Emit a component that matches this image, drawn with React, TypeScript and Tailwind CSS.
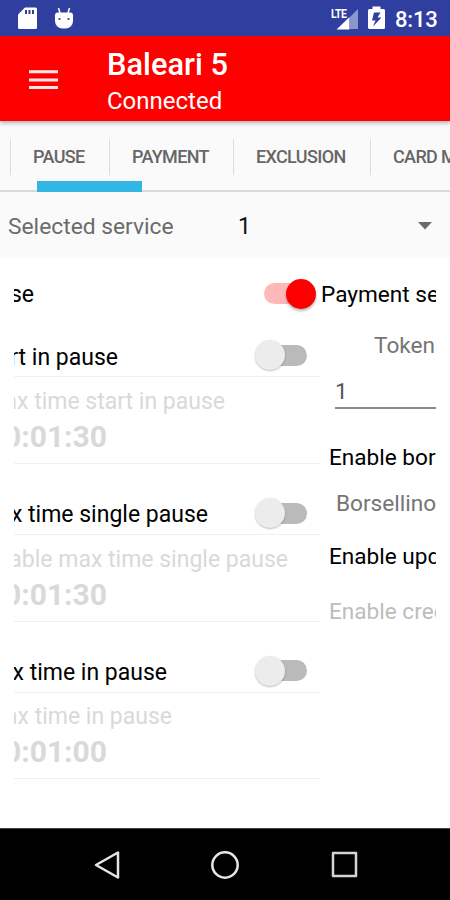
import type { ReactNode } from 'react'
import clsx from 'clsx'

// ── Data ──

const TABS = [
  { label: 'PAUSE', width: 'w-[99px]' },
  { label: 'PAYMENT', width: 'w-[124px]' },
  { label: 'EXCLUSION', width: 'w-[137px]' },
  { label: 'CARD MANAGEMENT', width: 'w-[220px]' },
]

const PAUSE_SETTINGS = [
  { title: 'rt in pause', titleBox: 'w-[104px] pt-[5px]', label: 'ax time start in pause', labelBox: 'w-[211px]', time: '0:01:30', row: 'h-[48px]', head: 'h-[42px]', body: 'h-[87px] pt-[9px]' },
  { title: 'x time single pause', titleBox: 'w-[194px] pt-[4px]', label: 'able max time single pause', labelBox: 'w-[274px]', time: '0:01:30', row: 'h-[71px]', head: 'h-[42px]', body: 'h-[87px] pt-[9px]' },
  { title: 'x time in pause', titleBox: 'w-[153px] pt-[5px]', label: 'ax time in pause', labelBox: 'w-[158px]', time: '0:01:00', row: 'h-[71px]', head: 'h-[43px]', body: 'h-[86px] pt-[8px]' },
]

// ── Status bar ──

function StatusBar() {
  return (
    <div className="flex h-9 items-center bg-[#303f9f] pr-3 pl-[18px] text-white">
      <svg width="19" height="23" viewBox="0 0 19 23">
        <path d="M7 0.5h10.500a1.500 1.500 0 0 1 1.500 1.500v18.500a1.500 1.500 0 0 1-1.500 1.500H1.500A1.500 1.500 0 0 1 0 20.500V7.500z" fill="#fff" />
        <path d="M8 3v4M11.500 3v4M15 3v4" stroke="#303f9f" strokeWidth="2" />
      </svg>
      <svg className="ml-[18px]" width="18" height="22" viewBox="0 0 18 22">
        <path d="M3.500 1l1.500 5M14.500 1l-1.500 5" stroke="#fff" strokeWidth="1.500" />
        <path d="M0 7.500Q0.500 5.500 2.500 5.500h13q2 0 2.500 2v6.500a7.500 7.500 0 0 1-7.500 7.500h-3a7.500 7.500 0 0 1-7.500-7.500z" fill="#fff" />
        <circle cx="4.500" cy="12" r="1.100" fill="#303f9f" />
        <circle cx="13.500" cy="12" r="1.100" fill="#303f9f" />
      </svg>
      <div className="flex-1" />
      <div className="relative mt-[1px] h-[22px] w-[28px]">
        <span className="absolute -top-[1px] left-0 origin-left scale-x-[0.8] text-[13px] leading-[14px] font-bold tracking-[-0.5px]">LTE</span>
        <svg className="absolute inset-0" width="28" height="22" viewBox="0 0 28 22">
          <path d="M19 9L27 1v20H19z" fill="#8d96cb" />
          <path d="M5.500 21.500L18.500 9v12.500z" fill="#fff" />
        </svg>
      </div>
      <svg className="-mt-[1px] ml-[9px]" width="17" height="24" viewBox="0 0 17 24">
        <path d="M4.500 0.500h8v2.500h3a1.500 1.500 0 0 1 1.500 1.500v17a1.500 1.500 0 0 1-1.500 1.500h-14A1.500 1.500 0 0 1 0 21.500v-17A1.500 1.500 0 0 1 1.500 3h3z" fill="#fff" />
        <path d="M12.500 6.500H6L4 14.500h3.500L5 20.500L13.500 11.500H9.500z" fill="#303f9f" />
      </svg>
      <span className="mt-[3px] ml-[10px] w-[43px] text-[22px] leading-6 font-medium tracking-[-0.200px] whitespace-nowrap">8:13</span>
    </div>
  )
}

function AppBar() {
  return (
    <header className="relative z-10 flex h-[85px] items-center bg-[#ff0000] pl-[29px] text-white shadow-[0_2px_4px_rgba(0,0,0,0.3)]">
      <svg className="mt-[2px]" width="29" height="20" viewBox="0 0 29 20">
        <path d="M0 1.700h29M0 9.900h29M0 17.500h29" stroke="#fff" strokeOpacity="0.9" strokeWidth="3" />
      </svg>
      <div className="ml-[49px] flex flex-col pt-[8px]">
        <h1 className="text-[30.800px] leading-[37px] font-medium">Baleari 5</h1>
        <p className="text-[24px] leading-[36px]">Connected</p>
      </div>
    </header>
  )
}

function Tabs() {
  return (
    <nav className="relative h-[71px] border-b-2 border-[#d9d9d9] bg-[#fafafa]">
      <div className="flex overflow-hidden pt-[18px] pl-[10px]">
        {TABS.map(tab => (
          <div key={tab.label} className={clsx('flex h-9 shrink-0 items-center border-l border-[#dcdcdc] pl-[22px]', tab.width)}>
            <span className="text-[18px] leading-6 font-medium tracking-[-0.650px] whitespace-nowrap text-[#666]">{tab.label}</span>
          </div>
        ))}
      </div>
      <div className="absolute top-[60px] left-[37px] h-[11px] w-[105px] bg-[#33b5e5]" />
    </nav>
  )
}

function ServiceSpinner() {
  return (
    <div className="flex h-[66px] items-center bg-[#fafafa] pr-[18px] pl-2">
      <span className="w-[230px] pt-[5px] text-[22.800px] text-[#6b6b6b]">Selected service</span>
      <span className="pt-[5px] text-[23px] text-[#111]">1</span>
      <svg className="mt-[1px] ml-auto" width="14" height="8" viewBox="0 0 14 8">
        <path d="M0 0h14L7 7.500z" fill="#6b6b6b" />
      </svg>
    </div>
  )
}

// ── Settings ──

function Switch({ on }: { on?: boolean }) {
  return (
    <div className={clsx('flex h-[21px] w-[43px] shrink-0 items-center rounded-full', on ? 'justify-end bg-[#ffb8b8]' : 'bg-[#bababa]')}>
      <div
        className={clsx(
          'size-[30px] shrink-0 rounded-full',
          on ? '-mr-[9px] bg-[#ff0000] shadow-[0_2px_3px_rgba(0,0,0,0.3)]' : '-ml-[9px] bg-[#ececec] shadow-[0_1px_2px_rgba(0,0,0,0.25)]',
        )}
      />
    </div>
  )
}

// Text anchored to its right edge, cut off by the left side of the page
function CutText({ className, children }: { className: string; children: ReactNode }) {
  return <div className={clsx('flex justify-end overflow-hidden whitespace-nowrap', className)}>{children}</div>
}

function PausePage() {
  return (
    <section className="w-[306px] shrink-0">
      <div className="flex h-[71px] items-center justify-between pr-[13px]">
        <CutText className="w-[20px] pt-[3px] text-[23px] leading-8 text-black">se</CutText>
        <Switch on />
      </div>
      {PAUSE_SETTINGS.map(item => (
        <div key={item.title}>
          <div className={clsx('flex items-end border-b border-[#f0f0f0] pr-[13px]', item.row)}>
            <div className={clsx('flex w-full items-center justify-between', item.head)}>
              <CutText className={clsx('text-[23px] leading-8 text-black', item.titleBox)}>{item.title}</CutText>
              <Switch />
            </div>
          </div>
          <div className={clsx('flex flex-col border-b border-[#f0f0f0]', item.body)}>
            <CutText className={clsx('text-[23px] leading-8 text-[#d9d9d9]', item.labelBox)}>{item.label}</CutText>
            <CutText className="-mt-[1px] w-[93px] text-[30px] leading-10 font-bold text-[#d9d9d9]">{item.time}</CutText>
          </div>
        </div>
      ))}
    </section>
  )
}

function PaymentPage() {
  return (
    <section className="w-[116px] shrink-0 overflow-hidden pl-[1px] text-[22.600px] leading-8 whitespace-nowrap text-black">
      <div className="pt-[21px]">Payment se</div>
      <div className="mt-[19px] pl-[53px] text-[#757575]">Token</div>
      <div className="mt-[14px] ml-[14px] h-[33px] border-b-2 border-[#8c8c8c] text-[#555]">1</div>
      <div className="mt-[33px] pl-2">Enable bor</div>
      <div className="mt-[14px] pl-[15px] text-[#757575]">Borsellino</div>
      <div className="mt-[21px] pl-2">Enable upd</div>
      <div className="mt-[23px] pl-2 text-[#bdbdbd]">Enable cred</div>
    </section>
  )
}

function NavBar() {
  return (
    <footer className="flex h-[72px] items-center justify-between border-t border-[#444] bg-black pr-[92px] pl-[94px]">
      <svg width="27" height="30" viewBox="0 0 27 30" fill="none" stroke="#e6e6e6" strokeWidth="2.500" strokeLinejoin="round">
        <path d="M24 2.500v25L2 15z" />
      </svg>
      <svg className="-ml-[3px]" width="30" height="30" viewBox="0 0 30 30" fill="none" stroke="#e6e6e6" strokeWidth="2.500">
        <circle cx="15" cy="15" r="12.700" />
      </svg>
      <svg width="27" height="27" viewBox="0 0 27 27" fill="none" stroke="#d4d4d4" strokeWidth="2.500" strokeLinejoin="round">
        <path d="M2 2h23v23H2z" />
      </svg>
    </footer>
  )
}

export default function App() {
  return (
    <div className="flex h-[900px] w-[450px] flex-col overflow-hidden bg-white font-['Roboto',sans-serif]">
      <StatusBar />
      <AppBar />
      <Tabs />
      <ServiceSpinner />
      <main className="mx-[14px] flex flex-1 overflow-hidden">
        <PausePage />
        <PaymentPage />
      </main>
      <NavBar />
    </div>
  )
}
